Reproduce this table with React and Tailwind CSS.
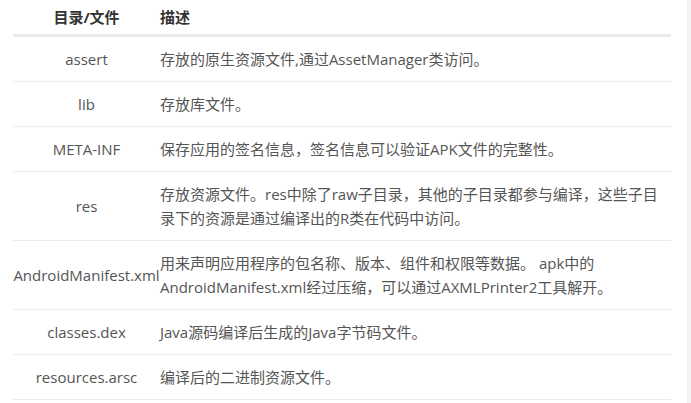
import React from "react";

const rows = [
  ["assert", "存放的原生资源文件,通过AssetManager类访问。"],
  ["lib", "存放库文件。"],
  ["META-INF", "保存应用的签名信息，签名信息可以验证APK文件的完整性。"],
  ["res", "存放资源文件。res中除了raw子目录，其他的子目录都参与编译，这些子目录下的资源是通过编译出的R类在代码中访问。"],
  ["AndroidManifest.xml", "用来声明应用程序的包名称、版本、组件和权限等数据。 apk中的AndroidManifest.xml经过压缩，可以通过AXMLPrinter2工具解开。"],
  ["classes.dex", "Java源码编译后生成的Java字节码文件。"],
  ["resources.arsc", "编译后的二进制资源文件。"],
];

export default function App() {
  return (
    <div
      className="flex w-[691px] h-[403px] bg-white overflow-hidden"
      style={{ fontFamily: '"Open Sans", "Noto Sans CJK SC", sans-serif' }}
    >
      <div className="flex-1 pl-[13px] pr-[16px]">
        <div className="grid grid-cols-[147px_1fr] text-[15px] leading-6 text-[#333] font-bold border-b-[3px] border-[#e9ebee]">
          <div className="text-center pt-[5px] pb-[5px] whitespace-nowrap">目录/文件</div>
          <div className="pt-[5px] pb-[5px]">描述</div>
        </div>
        {rows.map(([name, desc]) => (
          <div
            key={name}
            className="grid grid-cols-[147px_1fr] text-[15px] leading-6 text-[#555] border-b border-[#ececec]"
          >
            <div className="flex items-center justify-center py-[10px] whitespace-nowrap">
              <span>{name}</span>
            </div>
            <div className="py-[10px] pr-[12px]">{desc}</div>
          </div>
        ))}
      </div>
      <div className="w-[4px] bg-[#f2f3f5]" />
    </div>
  );
}
